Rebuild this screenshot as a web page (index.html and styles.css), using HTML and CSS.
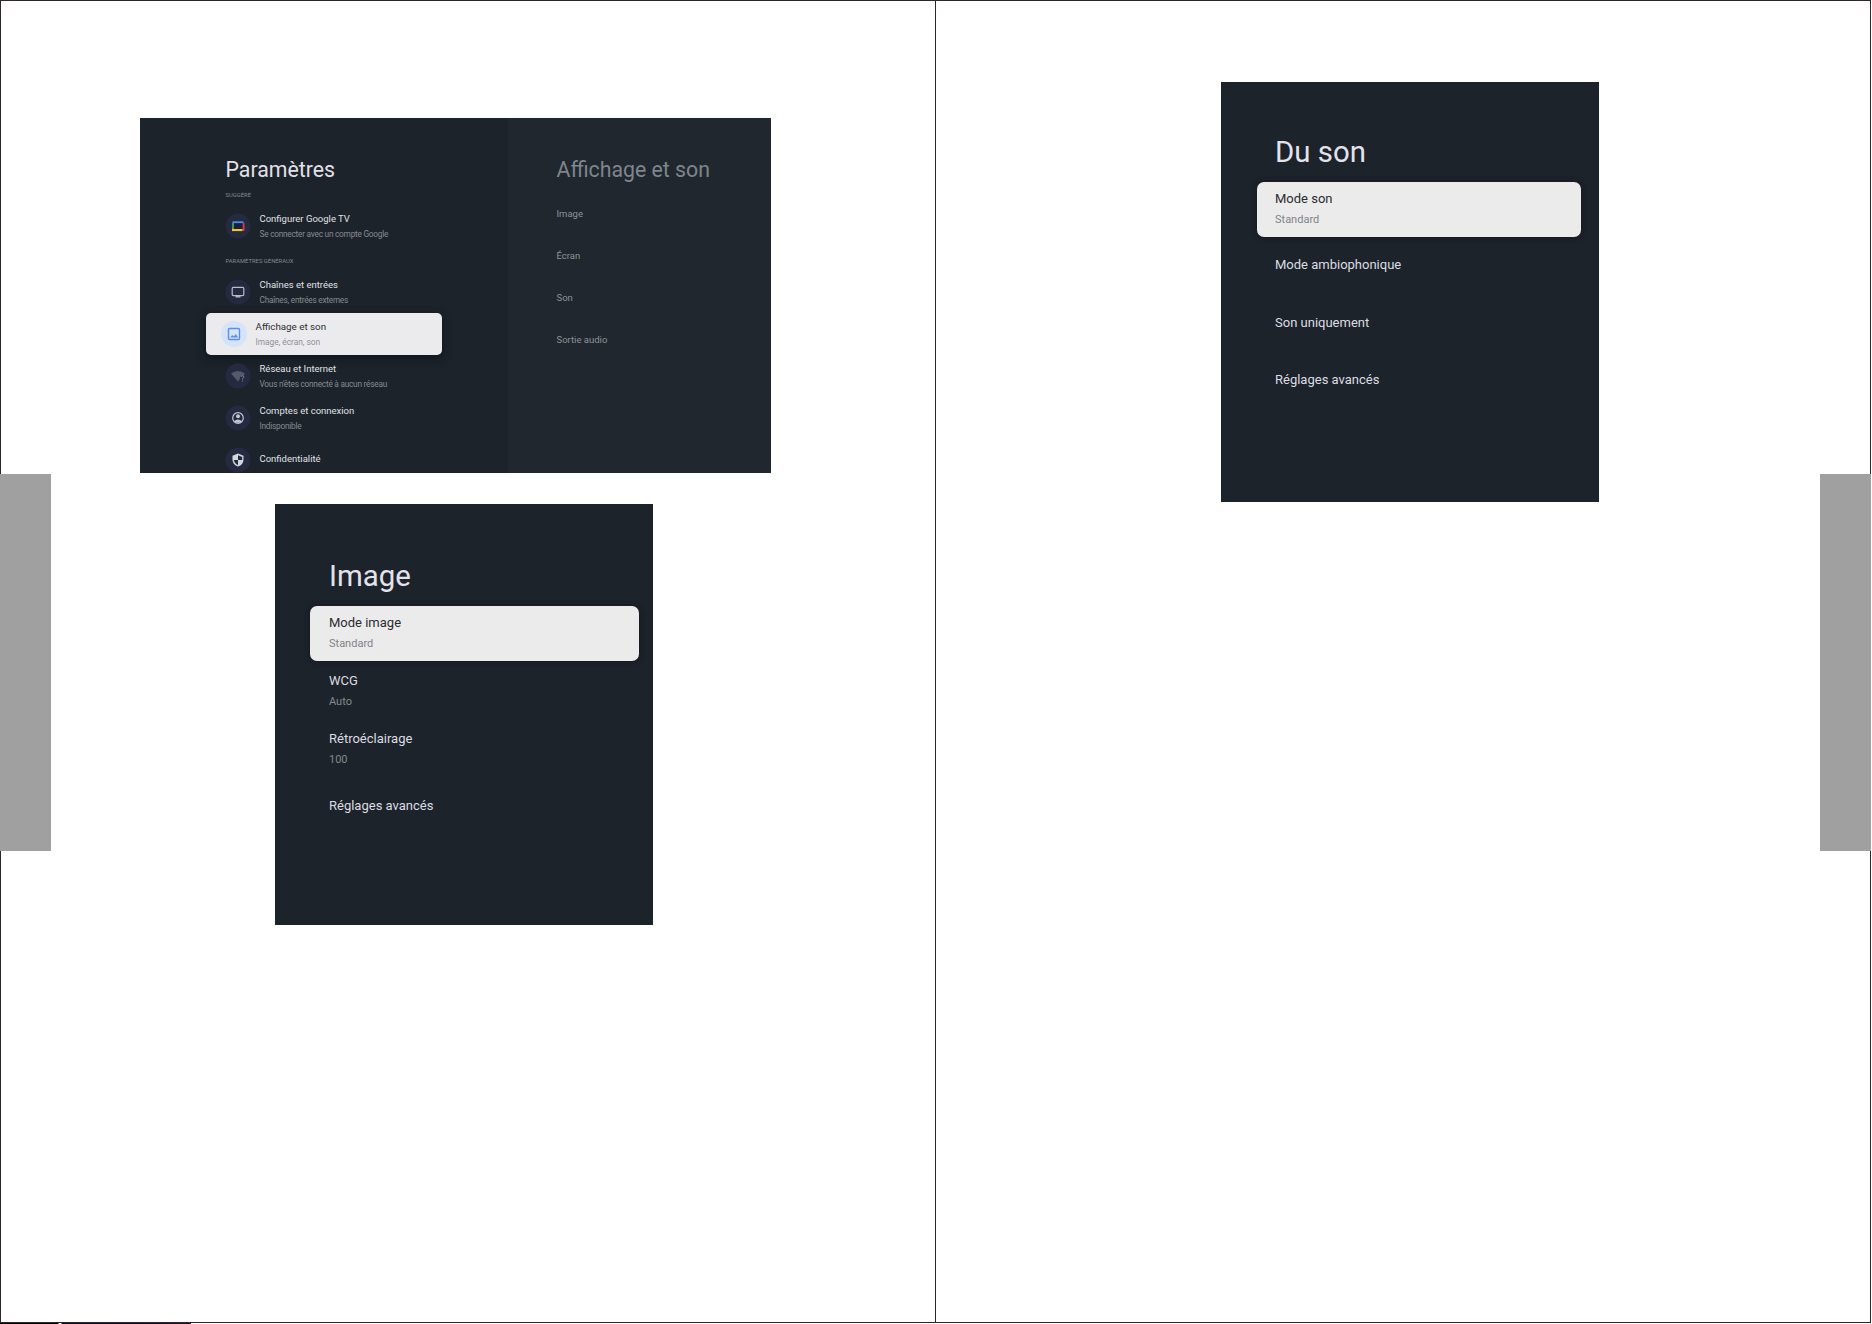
FILE: index.html
```
<!DOCTYPE html>
<html lang="fr">
<head>
    <meta charset="UTF-8">
    <meta name="viewport" content="width=device-width, initial-scale=1.0">
    <title>Paramètres - Affichage et son</title>
    <link rel="stylesheet" href="styles.css">
</head>
<body>
    <div class="spread">
        <div class="page page-left">
            <div class="tab"></div>
            <div class="figures">
                <!-- menu principal -->
                <div class="tv">
                    <div class="tv-menu">
                        <h1>Paramètres</h1>
                        <h2>SUGGÉRÉ</h2>
                        <div class="entry">
                            <svg class="icon" viewBox="0 0 26 26">
                                <circle cx="13" cy="13" r="12.5" fill="#252a40"/>
                                <path d="M8 10V17" stroke="#3a9a58" stroke-width="2"/>
                                <path d="M7.5 9.3H18.5" stroke="#4a8df0" stroke-width="2"/>
                                <path d="M18.5 10V18" stroke="#d8402f" stroke-width="2"/>
                                <path d="M7 17H17.5" stroke="#f2c230" stroke-width="2.2"/>
                                <path d="M9 10.3H17.5V15.9H9Z" fill="#17203f"/>
                            </svg>
                            <div class="label"><b>Configurer Google TV</b><i>Se connecter avec un compte Google</i></div>
                        </div>
                        <h2 class="general">PARAMÈTRES GÉNÉRAUX</h2>
                        <div class="entry">
                            <svg class="icon" viewBox="0 0 26 26">
                                <circle cx="13" cy="13" r="12.5" fill="#252a40"/>
                                <rect x="7.2" y="8.4" width="11.6" height="8.2" rx="1" fill="none" stroke="#b9bcc8" stroke-width="1.2"/>
                                <path d="M10.5 17.8H15.5" stroke="#b9bcc8" stroke-width="1.4"/>
                            </svg>
                            <div class="label"><b>Chaînes et entrées</b><i>Chaînes, entrées externes</i></div>
                        </div>
                        <div class="entry focus">
                            <svg class="icon" viewBox="0 0 26 26">
                                <circle cx="13" cy="13" r="13" fill="#d5e4fb"/>
                                <rect x="7.5" y="7.5" width="11" height="11" rx="1" fill="none" stroke="#5b8fe8" stroke-width="1.4"/>
                                <path d="M9.2 16.6L11.3 14L12.8 15.6L14.8 13L17 16.6Z" fill="#5b8fe8"/>
                            </svg>
                            <div class="label"><b>Affichage et son</b><i>Image, écran, son</i></div>
                        </div>
                        <div class="entry">
                            <svg class="icon" viewBox="0 0 26 26">
                                <circle cx="13" cy="13" r="12.5" fill="#252a40"/>
                                <path d="M6 10.5Q13 5.5 20 10.5L18.3 12.5Q15 11.5 14.8 16L13 18.5Z" fill="#555a6b"/>
                                <path d="M16 13.8Q16.4 12.4 17.9 12.7Q19.4 13.2 18.6 14.6L17.6 15.6V16.4M17.6 17.4V18.4" fill="none" stroke="#8a8e9c" stroke-width="1"/>
                            </svg>
                            <div class="label"><b>Réseau et Internet</b><i>Vous n'êtes connecté à aucun réseau</i></div>
                        </div>
                        <div class="entry">
                            <svg class="icon" viewBox="0 0 26 26">
                                <circle cx="13" cy="13" r="12.5" fill="#252a40"/>
                                <circle cx="13" cy="13" r="5.3" fill="none" stroke="#c3c6d0" stroke-width="1.2"/>
                                <circle cx="13" cy="11.3" r="2" fill="#c3c6d0"/>
                                <path d="M9 16.2Q13 12.6 17 16.2Q13 19.4 9 16.2Z" fill="#c3c6d0"/>
                            </svg>
                            <div class="label"><b>Comptes et connexion</b><i>Indisponible</i></div>
                        </div>
                        <div class="entry">
                            <svg class="icon" viewBox="0 0 26 26">
                                <circle cx="13" cy="13" r="12.5" fill="#252a40"/>
                                <path d="M13 6.5L18.5 8.8V12.7Q18.3 17.5 13 19.6Q7.7 17.5 7.5 12.7V8.8Z" fill="#d4d6de"/>
                                <path d="M13 8.2V13H17.2V9.9ZM13 13H8.9Q9.4 16.7 13 18.1Z" fill="#252a40"/>
                            </svg>
                            <div class="label"><b>Confidentialité</b></div>
                        </div>
                    </div>
                    <div class="tv-sub">
                        <h1>Affichage et son</h1>
                        <ul>
                            <li>Image</li>
                            <li>Écran</li>
                            <li>Son</li>
                            <li>Sortie audio</li>
                        </ul>
                    </div>
                </div>

                <!-- menu image -->
                <div class="panel panel-image">
                    <h1>Image</h1>
                    <div class="option double focus"><b>Mode image</b><i>Standard</i></div>
                    <div class="option double"><b>WCG</b><i>Auto</i></div>
                    <div class="option double"><b>Rétroéclairage</b><i>100</i></div>
                    <div class="option"><b>Réglages avancés</b></div>
                </div>
            </div>
        </div>

        <div class="page page-right">
            <!-- menu son -->
            <div class="figures">
                <div class="panel panel-son">
                    <h1>Du son</h1>
                    <div class="option double focus"><b>Mode son</b><i>Standard</i></div>
                    <div class="option"><b>Mode ambiophonique</b></div>
                    <div class="option"><b>Son uniquement</b></div>
                    <div class="option"><b>Réglages avancés</b></div>
                </div>
            </div>
            <div class="tab"></div>
        </div>
    </div>
    <div class="strip"></div>
</body>
</html>
```

FILE: styles.css
```
*{padding:0;margin:0;box-sizing:border-box;}
body{background-color:#fff;font-family:Roboto,"Liberation Sans",sans-serif;overflow:hidden;}
h1,h2{font-weight:400;}
b,i{display:block;font-style:normal;font-weight:400;white-space:nowrap;}
ul{list-style:none;}

/* double page */
.spread{display:flex;width:1871px;height:1323px;border:1px solid #2e2629;}
.page{display:flex;height:1321px;}
.page-left{width:935px;border-right:1px solid #2e2629;}
.page-right{width:934px;justify-content:space-between;}
.tab{flex:none;width:51px;height:377px;margin-top:473px;background:#a0a0a0;}
.page-left .tab{margin-left:-1px;}
.page-right .tab{margin-right:-1px;}
.strip{width:191px;height:1px;background:linear-gradient(to right,#000 58px,#fff 59px,#fff 61px,#0a0a2a 62px,#10102c 160px,#301030);}

/* menu principal */
.tv{display:flex;width:631px;height:355px;margin:117px 0 0 89px;background:#1c232a;overflow:hidden;}
.tv h1{height:32px;font-size:21.3px;line-height:28px;white-space:nowrap;}
.tv-menu{width:368px;padding:38px 0 0 66px;}
.tv-menu h1{padding-left:19.5px;color:#e2e0e8;}
.tv-menu h2{height:17px;padding-left:19.5px;font-size:5.85px;line-height:14px;color:#858891;white-space:nowrap;}
.tv-menu h2.general{height:24px;line-height:28px;}
.entry{display:flex;align-items:center;width:235.5px;height:42px;padding-left:19px;}
.icon{flex:none;width:26px;height:26px;}
.label{padding:2px 0 0 8.5px;}
.entry:last-child .label{padding-top:0;padding-bottom:2px;}
.entry b{font-size:9.5px;line-height:14px;color:#e0e2e6;}
.entry i{font-size:8.3px;line-height:16px;letter-spacing:-.25px;color:#868a92;}
.entry.focus{padding-left:15px;background:#ebebed;border-radius:5px;box-shadow:0 3px 8px 1px #11161f;}
.entry.focus b{font-size:9.8px;color:#2d2e32;}
.entry.focus i{letter-spacing:0;color:#909095;}
.tv-sub{flex:1;padding:38px 0 0 48.5px;background:#20272e;color:#7f858c;}
.tv-sub ul{padding-top:5px;}
.tv-sub li{height:42px;font-size:9.5px;line-height:42px;color:#8d9299;}

/* menus image et son */
.panel{width:378px;background:#1c232a;color:#dcdde2;}
.panel h1{font-size:29.4px;line-height:36px;color:#e4e2ea;}
.option{display:flex;flex-direction:column;justify-content:center;height:58px;}
.option b{font-size:13px;line-height:20px;}
.option i{font-size:11px;line-height:22px;color:#85898f;}
.option.double{padding-top:3px;}
.option.focus{height:55px;padding-top:1px;border-radius:7px;background:#ebebec;box-shadow:0 0 5px 1px #1c1822;}
.option.focus b{color:#2b2b2f;}
.option.focus i{color:#828286;}
.panel-image{height:421px;margin:31px 0 0 224px;padding:54px 14px 0 35px;}
.panel-image .option,.panel-image h1{padding-left:19px;}
.panel-image h1{height:47.5px;}
.panel-image .focus{margin-bottom:1px;}
.panel-image .option:last-child{padding-bottom:2px;}
.panel-son{height:420px;margin:81px 0 0 285px;padding:52px 18px 0 36px;}
.panel-son .option,.panel-son h1{padding-left:18px;}
.panel-son h1{height:47.5px;}
.panel-son .option:not(.focus){height:57.5px;}
```
